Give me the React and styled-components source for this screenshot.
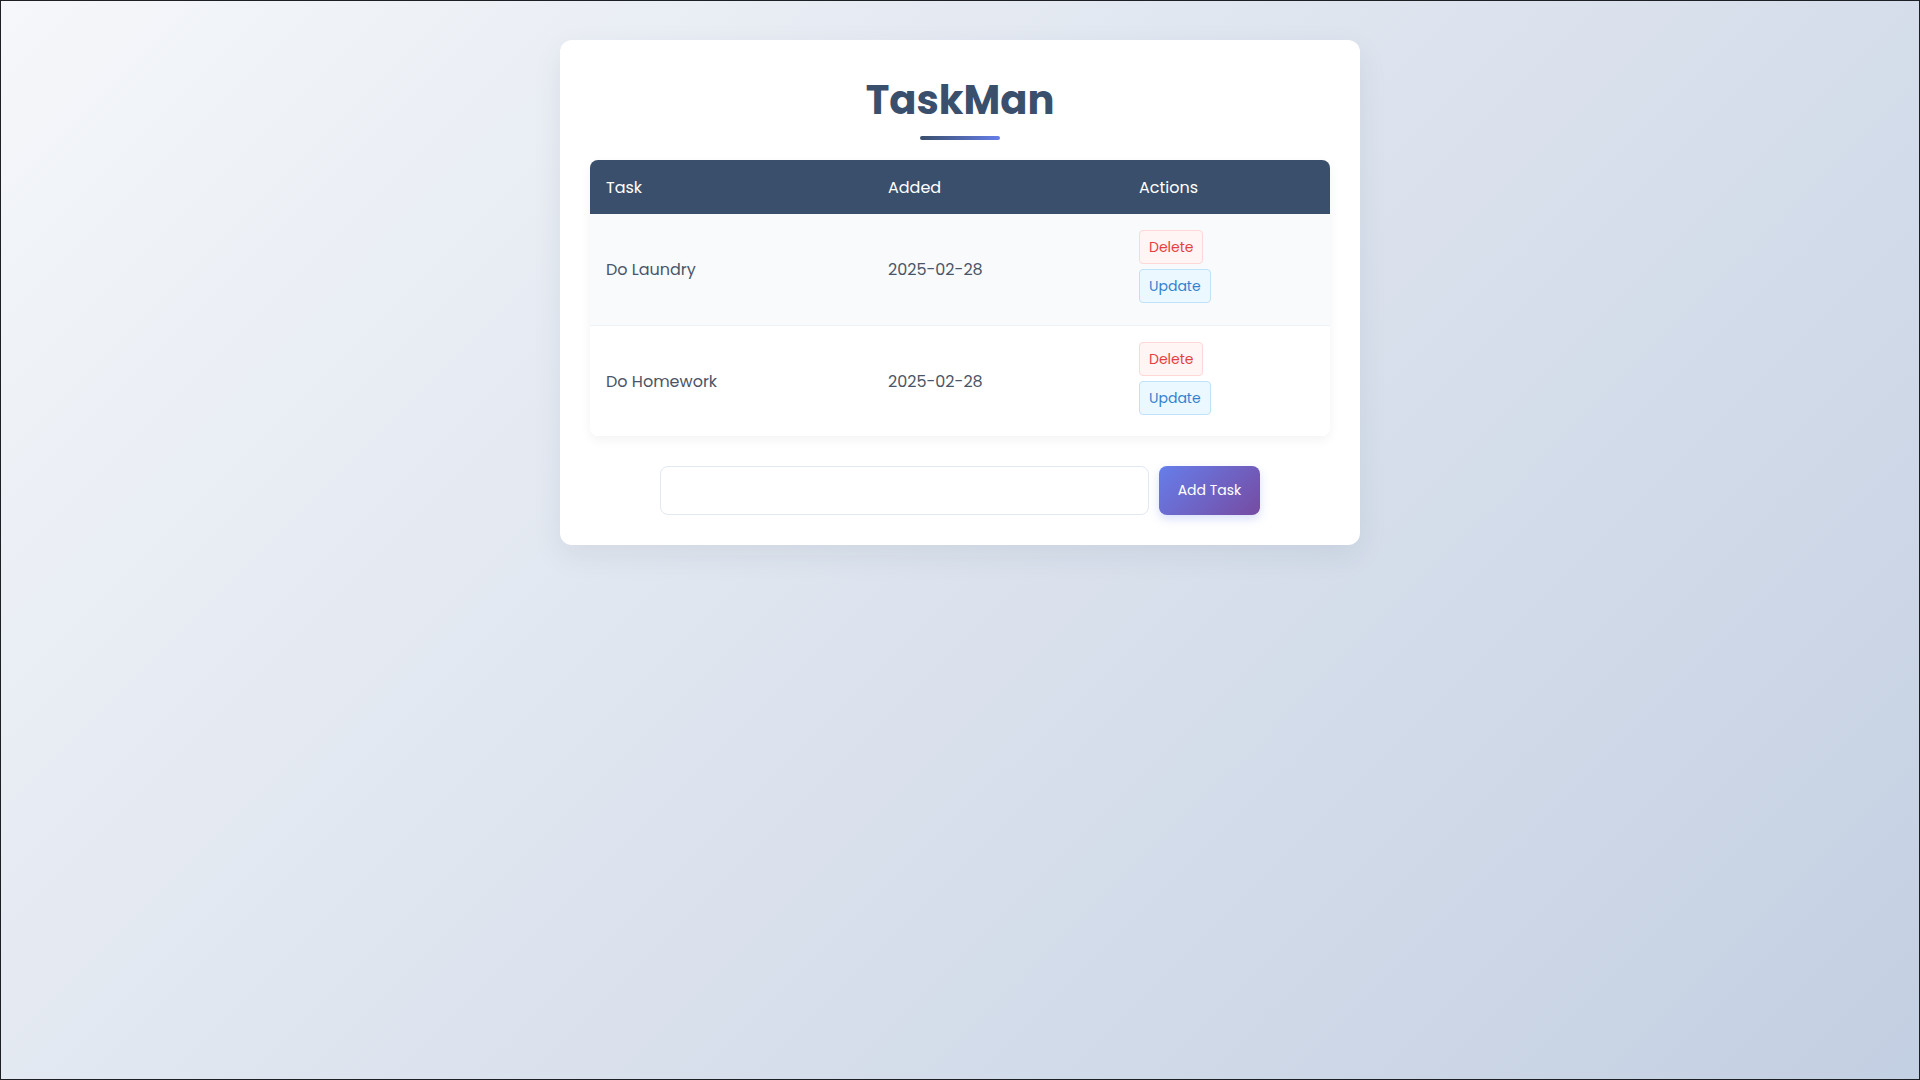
import React from "react";
import styled, { createGlobalStyle } from "styled-components";

const GlobalStyle = createGlobalStyle`
  *, *::before, *::after { box-sizing: border-box; }
  html, body { margin: 0; padding: 0; }
  body {
    font-family: "Poppins", Inter, "Open Sans", "Noto Sans", sans-serif;
    color: #4a5568;
  }
`;

const Page = styled.div`
  min-height: 100vh;
  border: 1px solid #1c1f24;
  background: linear-gradient(135deg, #f5f7fa 0%, #c3cfe2 100%);
  padding: 39px 0;
  display: flex;
  flex-direction: column;
  align-items: center;
`;

const Card = styled.div`
  width: 800px;
  background: #ffffff;
  border-radius: 12px;
  padding: 30px;
  box-shadow: 0 10px 30px rgba(30, 45, 80, 0.08);
  display: flex;
  flex-direction: column;
  align-items: center;
`;

const Title = styled.h1`
  margin: 6px 0 0;
  font-size: 40px;
  line-height: 48px;
  font-weight: 700;
  color: #3a4f6b;
  letter-spacing: 0;
`;

const Underline = styled.div`
  width: 80px;
  height: 4px;
  border-radius: 2px;
  margin: 12px 0 20px;
  background: linear-gradient(90deg, #3a4f6b 0%, #667eea 100%);
`;

const Table = styled.table`
  width: 740px;
  border-collapse: separate;
  border-spacing: 0;
  border-radius: 8px;
  overflow: hidden;
  box-shadow: 0 4px 12px rgba(0, 0, 0, 0.05);
  table-layout: fixed;
`;

const HeadCell = styled.th`
  width: ${(p) => p.$w}px;
  height: 54px;
  padding: 0 16px;
  background: #3a4f6b;
  color: #ffffff;
  font-size: 16px;
  font-weight: 400;
  text-align: left;
`;

const Row = styled.tr`
  background: ${(p) => (p.$alt ? "#f8fafc" : "#ffffff")};
`;

const Cell = styled.td`
  padding: 16px;
  height: ${(p) => (p.$last ? 110 : 112)}px;
  font-size: 16px;
  font-weight: 400;
  color: #4a5568;
  vertical-align: middle;
  border-bottom: ${(p) => (p.$last ? "none" : "1px solid #edf2f7")};
`;

const ActionCell = styled(Cell)`
  vertical-align: top;
`;

const Actions = styled.div`
  display: flex;
  flex-direction: column;
  align-items: flex-start;
  gap: 5px;
`;

const SmallButton = styled.button`
  font-family: inherit;
  font-size: 14px;
  font-weight: 400;
  line-height: 22px;
  padding: 5px 9px;
  border-radius: 4px;
  cursor: pointer;
  color: ${(p) => (p.$kind === "delete" ? "#e53e3e" : "#3182ce")};
  background: ${(p) => (p.$kind === "delete" ? "#fff5f5" : "#ebf8ff")};
  border: 1px solid ${(p) => (p.$kind === "delete" ? "#fed7d7" : "#bee3f8")};
`;

const Form = styled.form`
  width: 600px;
  display: flex;
  gap: 10px;
  margin-top: 30px;
`;

const Input = styled.input`
  flex: 1;
  height: 49px;
  padding: 0 16px;
  font-family: inherit;
  font-size: 16px;
  border: 1px solid #e2e8f0;
  border-radius: 8px;
  background: #ffffff;
  outline: none;
`;

const AddButton = styled.button`
  width: 101px;
  height: 49px;
  border: none;
  border-radius: 8px;
  font-family: inherit;
  font-size: 14px;
  font-weight: 400;
  color: #ffffff;
  cursor: pointer;
  background: linear-gradient(135deg, #667eea 0%, #764ba2 100%);
  box-shadow: 0 4px 10px rgba(102, 126, 234, 0.25);
`;

const tasks = [
  { name: "Do Laundry", added: "2025-02-28" },
  { name: "Do Homework", added: "2025-02-28" },
];

export default function App() {
  return (
    <>
      <GlobalStyle />
      <Page>
        <Card>
          <Title>TaskMan</Title>
          <Underline />
          <Table>
            <thead>
              <tr>
                <HeadCell $w={282}>Task</HeadCell>
                <HeadCell $w={251}>Added</HeadCell>
                <HeadCell $w={207}>Actions</HeadCell>
              </tr>
            </thead>
            <tbody>
              {tasks.map((t, i) => {
                const last = i === tasks.length - 1;
                return (
                  <Row key={t.name} $alt={i % 2 === 0}>
                    <Cell $last={last}>{t.name}</Cell>
                    <Cell $last={last}>{t.added}</Cell>
                    <ActionCell $last={last}>
                      <Actions>
                        <SmallButton type="button" $kind="delete">Delete</SmallButton>
                        <SmallButton type="button" $kind="update">Update</SmallButton>
                      </Actions>
                    </ActionCell>
                  </Row>
                );
              })}
            </tbody>
          </Table>
          <Form onSubmit={(e) => e.preventDefault()}>
            <Input type="text" />
            <AddButton type="submit">Add Task</AddButton>
          </Form>
        </Card>
      </Page>
    </>
  );
}
